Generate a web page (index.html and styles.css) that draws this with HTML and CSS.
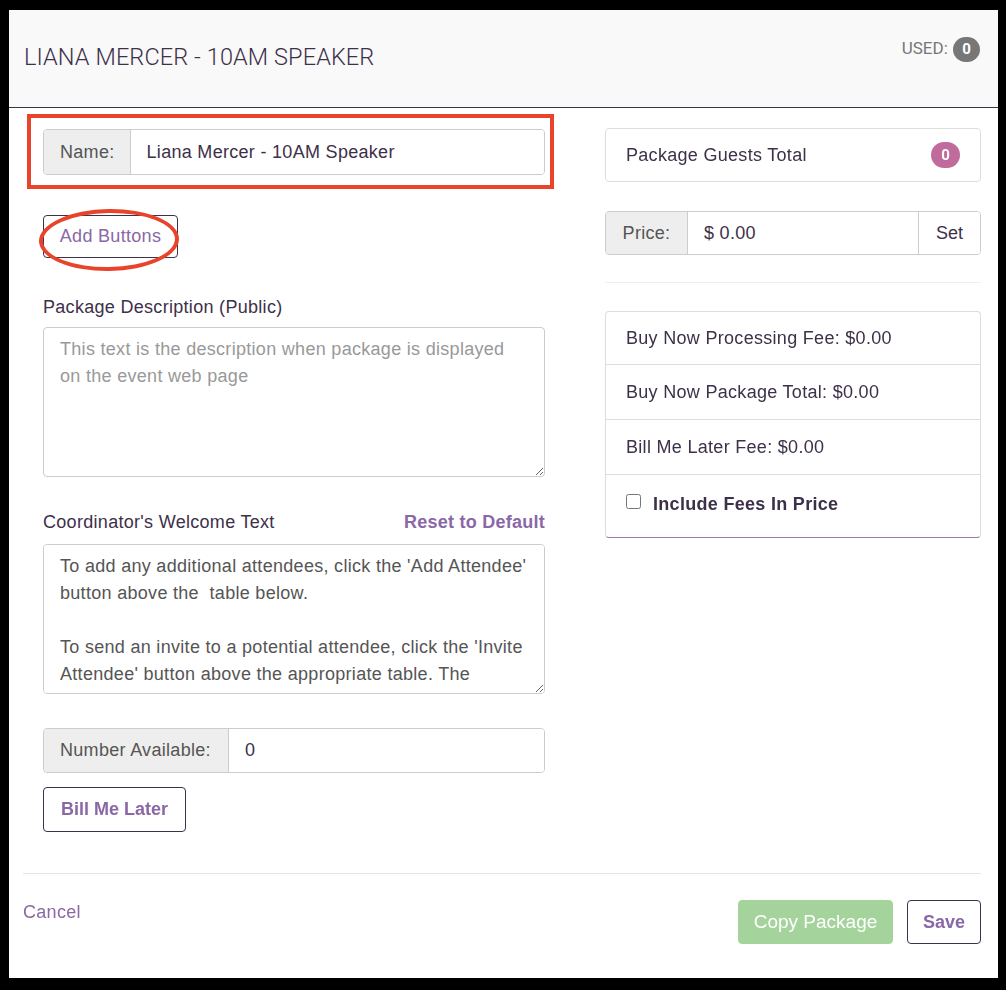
FILE: index.html
```html
<!DOCTYPE html>
<html lang="en">
<head>
  <meta charset="UTF-8">
  <meta name="viewport" content="width=device-width, initial-scale=1.0">
  <title>Edit Package</title>
  <link rel="stylesheet" href="styles.css">
</head>
<body>
  <div class="modal">
    <!-- Header -->
    <div class="modal-header">
      <h4 class="modal-title">LIANA MERCER - 10AM SPEAKER</h4>
      <div class="used">USED: <span class="badge badge-gray">0</span></div>
    </div>

    <!-- Body: form on the left, totals on the right -->
    <div class="modal-body">
      <div class="col-left">
        <div class="field-name">
          <div class="input-group">
            <span class="addon">Name:</span>
            <input class="form-control" type="text" value="Liana Mercer - 10AM Speaker">
          </div>
          <span class="callout-box"></span>
        </div>

        <div class="add-buttons">
          <button class="btn btn-outline">Add Buttons</button>
          <span class="callout-ring"></span>
        </div>

        <label class="field-label">Package Description (Public)</label>
        <textarea class="form-control textarea" placeholder="This text is the description when package is displayed on the event web page"></textarea>

        <div class="label-row">
          <label class="field-label">Coordinator's Welcome Text</label>
          <a href="#" class="reset-link">Reset to Default</a>
        </div>
        <textarea class="form-control textarea welcome">To add any additional attendees, click the 'Add Attendee' button above the  table below.

To send an invite to a potential attendee, click the 'Invite Attendee' button above the appropriate table. The individual will receive an invite email from you.</textarea>

        <div class="input-group number-group">
          <span class="addon">Number Available:</span>
          <input class="form-control" type="text" value="0">
        </div>

        <button class="btn btn-outline btn-bold bill-later">Bill Me Later</button>
      </div>

      <div class="col-right">
        <div class="panel guests">
          <span>Package Guests Total</span>
          <span class="badge badge-pink">0</span>
        </div>

        <div class="input-group price-group">
          <span class="addon">Price:</span>
          <input class="form-control" type="text" value="$ 0.00">
          <button class="set-btn">Set</button>
        </div>

        <hr class="divider">

        <ul class="fees">
          <li>Buy Now Processing Fee: $0.00</li>
          <li>Buy Now Package Total: $0.00</li>
          <li>Bill Me Later Fee: $0.00</li>
          <li class="fees-check">
            <label><input type="checkbox"> <b>Include Fees In Price</b></label>
          </li>
        </ul>
      </div>
    </div>

    <!-- Footer -->
    <div class="modal-footer">
      <a href="#" class="cancel">Cancel</a>
      <div class="footer-actions">
        <button class="btn btn-green">Copy Package</button>
        <button class="btn btn-outline btn-bold">Save</button>
      </div>
    </div>
  </div>
</body>
</html>
```

FILE: styles.css
```css
body {
  margin: 0;
  background: #000;
  font-family: 'Liberation Sans', Arial, Helvetica, sans-serif;
  letter-spacing: 0.3px;
  color: #3d3049;
  padding: 10px 8px 12px 9px;
}

.modal {
  background: #fff;
  height: 968px;
  display: flex;
  flex-direction: column;
}

/* Header */
.modal-header {
  height: 98px;
  flex: none;
  background: #f9f9f9;
  border-bottom: 1px solid #3d3049;
  display: flex;
  justify-content: space-between;
  padding: 0 18px 0 15px;
  box-sizing: border-box;
  letter-spacing: 0;
}

.modal-title {
  margin: 0;
  padding-top: 33px;
  font-family: Roboto, sans-serif;
  font-weight: 300;
  font-size: 23.5px;
  color: #3d3049;
  letter-spacing: 0.1px;
}

.used {
  padding-top: 27px;
  font-family: Roboto, sans-serif;
  font-size: 17px;
  color: #777;
}

.badge {
  display: inline-block;
  min-width: 27px;
  height: 25px;
  line-height: 25px;
  border-radius: 13px;
  text-align: center;
  color: #fff;
  font-weight: bold;
  font-size: 15px;
  font-family: Roboto, sans-serif;
  letter-spacing: 0;
  box-sizing: border-box;
}

.badge-gray {
  background: #777;
  margin-left: 1px;
}

.badge-pink {
  background: #c06b9c;
  min-width: 29px;
  height: 26px;
  line-height: 26px;
}

/* Body */
.modal-body {
  display: flex;
  padding: 0 17px 0 34px;
  gap: 60px;
  flex: 1;
}

.col-left {
  width: 502px;
  flex: none;
  display: flex;
  flex-direction: column;
}

.col-right {
  width: 376px;
  flex: none;
  min-width: 0;
  padding-top: 20px;
}

.input-group {
  display: flex;
  height: 46px;
  border: 1px solid #ccc;
  border-radius: 4px;
  box-sizing: border-box;
  overflow: hidden;
}

.addon {
  background: #eee;
  color: #555;
  font-size: 18px;
  padding: 0 16px;
  display: flex;
  align-items: center;
  border-right: 1px solid #ccc;
}

.form-control {
  font-family: 'Liberation Sans', Arial, sans-serif;
  font-size: 18px;
  letter-spacing: 0.3px;
  color: #3d3049;
  border: 0;
  outline: none;
  padding: 0 16px;
  flex: 1;
  min-width: 0;
  width: 100%;
}

.field-name {
  position: relative;
  margin-top: 21px;
}

.field-name .addon {
  padding: 0 15px 0 16px;
}

/* red annotation frame drawn over the name field */
.callout-box {
  position: absolute;
  top: -15px;
  left: -16px;
  right: -9px;
  bottom: -14px;
  border: 4px solid #e8432b;
  pointer-events: none;
}

.btn {
  font-family: 'Liberation Sans', Arial, sans-serif;
  font-size: 18px;
  letter-spacing: 0.3px;
  border-radius: 4px;
  cursor: pointer;
  box-sizing: border-box;
}

.btn-outline {
  background: #fff;
  border: 1px solid #3d3049;
  color: #8a67a6;
}

.btn-bold {
  font-weight: bold;
}

.add-buttons {
  position: relative;
  margin-top: 40px;
  align-self: flex-start;
}

.add-buttons .btn {
  width: 135px;
  height: 43px;
  display: block;
}

/* red ring drawn round the Add Buttons control */
.callout-ring {
  position: absolute;
  left: -4px;
  right: -1px;
  top: -6px;
  bottom: -13px;
  border: 4px solid #e8432b;
  border-radius: 50%;
  transform: rotate(-1deg);
  pointer-events: none;
}

.field-label {
  font-family: 'Liberation Sans', Arial, sans-serif;
  font-size: 18px;
  color: #3d3049;
}

.col-left > .field-label {
  margin-top: 39px;
  line-height: 20px;
}

.textarea {
  margin-top: 10px;
  height: 150px;
  border: 1px solid #ccc;
  border-radius: 4px;
  padding: 8px 16px;
  line-height: 27px;
  resize: vertical;
  box-sizing: border-box;
  color: #555;
  flex: none;
}

.textarea::placeholder {
  color: #999;
}

.label-row {
  display: flex;
  justify-content: space-between;
  align-items: baseline;
  margin-top: 34px;
  line-height: 22px;
}

.reset-link {
  color: #8a67a6;
  font-weight: bold;
  font-size: 18px;
  letter-spacing: 0.25px;
  text-decoration: none;
}

.welcome {
  margin-top: 11px;
}

.number-group {
  margin-top: 34px;
  height: 45px;
}

.number-group .addon {
  padding: 0 16px 0 16px;
  width: 185px;
  box-sizing: border-box;
}

.bill-later {
  margin-top: 14px;
  width: 143px;
  height: 45px;
  align-self: flex-start;
  letter-spacing: 0;
}

/* Right column */
.panel {
  border: 1px solid #ddd;
  border-radius: 4px;
}

.guests {
  height: 54px;
  box-sizing: border-box;
  display: flex;
  justify-content: space-between;
  align-items: center;
  padding: 0 20px 0 20px;
  font-size: 18px;
}

.price-group {
  margin-top: 29px;
  height: 44px;
}

.price-group .addon {
  width: 82px;
  box-sizing: border-box;
  justify-content: center;
}

.set-btn {
  background: #fff;
  border: 0;
  border-left: 1px solid #ccc;
  width: 62px;
  flex: none;
  font-family: 'Liberation Sans', Arial, sans-serif;
  font-size: 18px;
  color: #3d3049;
}

.divider {
  border: 0;
  border-top: 1px solid #eee;
  margin: 27px 0 28px;
}

.fees {
  list-style: none;
  margin: 0;
  padding: 0;
  border: 1px solid #ddd;
  border-bottom: 1px solid #9b7bb5;
  border-radius: 4px;
  font-size: 18px;
}

.fees li {
  height: 54px;
  display: flex;
  align-items: center;
  padding: 0 20px;
  border-top: 1px solid #ddd;
}

.fees li:first-child {
  border-top: 0;
  height: 52px;
}

.fees li.fees-check {
  height: 63px;
  padding-bottom: 4px;
  box-sizing: border-box;
}

.fees-check label {
  display: flex;
  align-items: center;
}

.fees-check input {
  width: 15px;
  height: 15px;
  margin: 0 12px 5px 0;
}

/* Footer */
.modal-footer {
  margin: 0 17px 0 14px;
  border-top: 1px solid #e5e5e5;
  height: 105px;
  flex: none;
  box-sizing: border-box;
  display: flex;
  justify-content: space-between;
  padding-top: 26px;
}

.cancel {
  color: #8a67a6;
  text-decoration: none;
  font-size: 18px;
  margin-top: 2px;
}

.footer-actions {
  display: flex;
  gap: 14px;
}

.footer-actions .btn {
  height: 44px;
  letter-spacing: 0;
}

.btn-green {
  background: #a5d39c;
  border: 1px solid #a5d39c;
  color: #fff;
  font-size: 19px;
  width: 155px;
}

.footer-actions .btn-outline {
  width: 74px;
}
```
